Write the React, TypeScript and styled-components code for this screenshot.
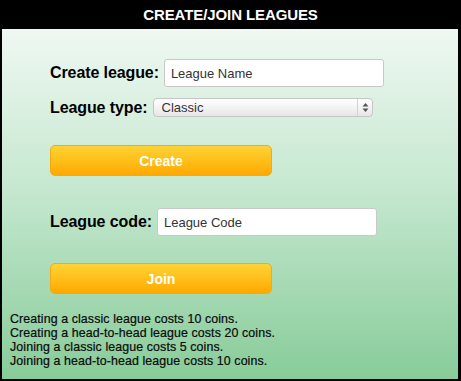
import styled, { createGlobalStyle } from "styled-components";

const Global = createGlobalStyle`
  html, body {
    margin: 0;
    padding: 0;
    background: #000;
  }
  body {
    font-family: "Liberation Sans", Arial, sans-serif;
  }
`;

// 전체 프레임 (검은 테두리)
const Frame = styled.div`
  width: 461px;
  height: 381px;
  box-sizing: border-box;
  background: #000;
  padding: 0 3px 2px 2px;
  display: flex;
  flex-direction: column;
`;

const Header = styled.div`
  height: 29px;
  display: flex;
  align-items: center;
  justify-content: center;
  color: #fff;
  font-weight: bold;
  font-size: 15px;
  letter-spacing: -0.1px;
  padding-left: 1px;
`;

const Panel = styled.div`
  flex: 1;
  background: linear-gradient(to bottom, #eff8f2 0%, #c6e8d0 45%, #88cc99 100%);
  display: flex;
  flex-direction: column;
`;

const Form = styled.div`
  padding: 30px 0 0 48px;
  display: flex;
  flex-direction: column;
`;

const Row = styled.div<{ mt?: number }>`
  display: flex;
  align-items: center;
  margin-top: ${(p) => p.mt ?? 0}px;
`;

const Label = styled.label`
  font-size: 16px;
  font-weight: bold;
  color: #000;
  margin-right: 5px;
  letter-spacing: -0.1px;
`;

const TextInput = styled.input`
  width: 220px;
  height: 28px;
  box-sizing: border-box;
  border: 1px solid #c9c9c9;
  border-radius: 3px;
  background: #fff;
  padding: 0 6px;
  font-family: "Liberation Sans", Arial, sans-serif;
  font-size: 13px;
  color: #333;
  outline: none;
  &::placeholder {
    color: #333;
  }
`;

const SelectWrap = styled.div`
  position: relative;
  width: 220px;
  height: 19px;
`;

const Select = styled.select`
  appearance: none;
  width: 100%;
  height: 100%;
  box-sizing: border-box;
  border: 1px solid #c6c6c6;
  border-radius: 4px;
  background: linear-gradient(to bottom, #ffffff 0%, #f3f3f3 50%, #e6e6e6 100%);
  padding: 0 0 0 8px;
  font-family: "Liberation Sans", Arial, sans-serif;
  font-size: 13px;
  color: #333;
  outline: none;
`;

// 셀렉트 오른쪽 화살표
const Arrows = styled.span`
  position: absolute;
  right: 0;
  top: 1px;
  bottom: 1px;
  width: 15px;
  border-left: 1px solid #d4d4d4;
  display: flex;
  align-items: center;
  justify-content: center;
  pointer-events: none;
`;

const Button = styled.button<{ mt: number }>`
  width: 222px;
  height: 31px;
  margin-top: ${(p) => p.mt}px;
  border: 1px solid #f2ab12;
  border-radius: 5px;
  background: linear-gradient(to bottom, #fdd335 0%, #ffbf1a 50%, #ffa800 100%);
  color: #fff;
  font-family: "Liberation Sans", Arial, sans-serif;
  font-size: 14px;
  font-weight: bold;
  cursor: pointer;
`;

const Notes = styled.div`
  margin-top: 18px;
  padding-left: 8px;
  font-size: 12.4px;
  line-height: 14px;
  letter-spacing: 0.1px;
  color: #0a0a0a;
  -webkit-text-stroke: 0.2px #0a0a0a;
`;

function App() {
  return (
    <>
      <Global />
      <Frame>
        <Header>CREATE/JOIN LEAGUES</Header>
        <Panel>
          <Form>
            <Row>
              <Label>Create league:</Label>
              <TextInput placeholder="League Name" />
            </Row>
            <Row mt={11}>
              <Label>League type:</Label>
              <SelectWrap>
                <Select defaultValue="classic">
                  <option value="classic">Classic</option>
                  <option value="h2h">Head-to-head</option>
                </Select>
                <Arrows>
                  <svg width="7" height="11" viewBox="0 0 7 11">
                    <path d="M3.5 1 L6.5 4.5 L0.5 4.5 Z" fill="#555" />
                    <path d="M3.5 10 L6.5 6.5 L0.5 6.5 Z" fill="#555" />
                  </svg>
                </Arrows>
              </SelectWrap>
            </Row>
            <Button mt={28}>Create</Button>
            <Row mt={32}>
              <Label>League code:</Label>
              <TextInput placeholder="League Code" />
            </Row>
            <Button mt={27}>Join</Button>
          </Form>
          <Notes>
            <div>Creating a classic league costs 10 coins.</div>
            <div>Creating a head-to-head league costs 20 coins.</div>
            <div>Joining a classic league costs 5 coins.</div>
            <div>Joining a head-to-head league costs 10 coins.</div>
          </Notes>
        </Panel>
      </Frame>
    </>
  );
}

export default App;
